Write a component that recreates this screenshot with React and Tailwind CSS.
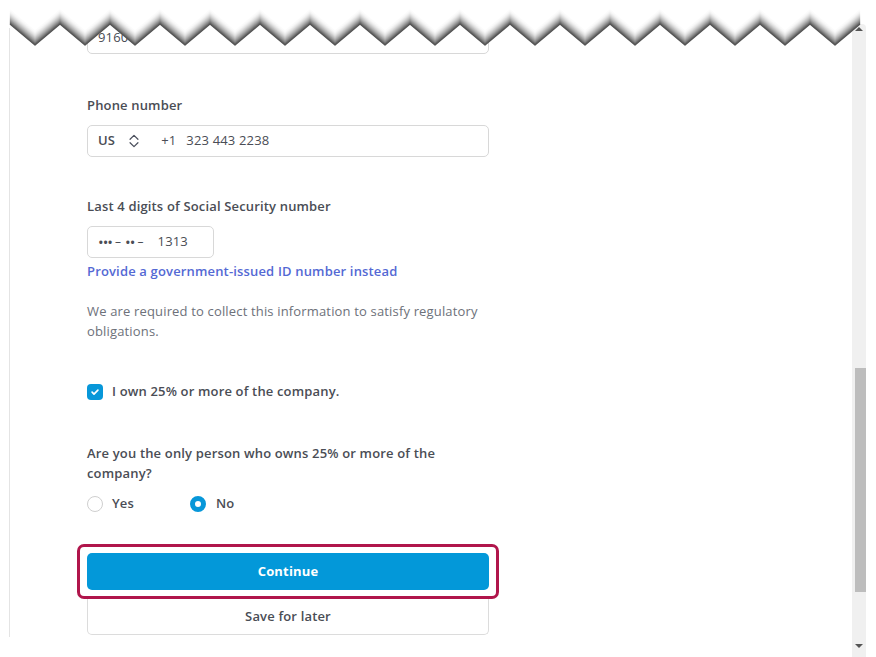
import React from 'react';

const ZIG_START = 10;
const ZIG_END = 860;

// bottom edge of the torn-paper band, shifted by d pixels
function zigPoints(d) {
    const pts = [];
    let k = 0;
    for (let x = ZIG_START; x <= ZIG_END; x += 25, k++) {
        const y = (k % 2 === 0 ? 24 : 45) + d;
        pts.push(`${x},${y}`);
    }
    return pts;
}

const TornEdge = () => {
    const top = zigPoints(-14);
    const cover = ['0,0', '876,0', '876,26', `${ZIG_END},10`, ...top.slice().reverse(), '10,28', '0,28'].join(' ');
    const bands = [];
    for (let i = 0; i <= 14; i++) {
        const t = i / 14;
        const g = Math.round(252 - 168 * Math.pow(t, 1.7));
        bands.push(
            <polyline
                key={i}
                points={zigPoints(-14 + i).join(' ')}
                fill="none"
                stroke={`rgb(${g},${g},${g})`}
                strokeWidth="1.4"
                strokeLinejoin="round"
            />
        );
    }
    return (
        <svg className="absolute left-0 top-0 pointer-events-none" width="876" height="60" viewBox="0 0 876 60" aria-hidden="true">
            <polygon points={cover} fill="#fff" />
            {bands}
        </svg>
    );
};

const UpDown = () => (
    <svg viewBox="0 0 16 16" className="h-[16px] w-[14px]" fill="none" stroke="#4a4f5c" strokeWidth="1.4" strokeLinecap="round" strokeLinejoin="round" aria-hidden="true">
        <path d="M3.5 6l4.5-4.5 4.5 4.5" />
        <path d="M3.5 10l4.5 4.5 4.5-4.5" />
    </svg>
);

const Label = ({ children, className = '' }) => (
    <div className={`text-[13px] leading-[20px] font-semibold text-[#4a4d55] ${className}`}>{children}</div>
);

export default function App() {
    return (
        <div className="relative w-[876px] h-[657px] overflow-hidden bg-white font-['Open_Sans','Noto_Sans',sans-serif] tracking-[0.16px]">
            <div className="flex h-full">
                {/* page frame */}
                <div className="ml-[9px] w-[843px] h-[637px] border-l border-[#e4e4e4]">
                    <div className="ml-[77px] w-[402px] pt-[22px]">
                        <div className="h-[32px] rounded-[5px] border border-[#d8d8d8] px-[10px] flex items-center text-[13px] text-[#4a4d55]">
                            9160
                        </div>

                        <Label className="mt-[41px]">Phone number</Label>
                        <div className="mt-[10px] h-[32px] rounded-[5px] border border-[#d8d8d8] px-[10px] flex items-center text-[13px] text-[#4a4d55]">
                            <span className="font-semibold">US</span>
                            <span className="ml-[12px]"><UpDown /></span>
                            <span className="ml-[20px]">+1</span>
                            <span className="ml-[10px]">323 443 2238</span>
                        </div>

                        <Label className="mt-[39px]">Last 4 digits of Social Security number</Label>
                        <div className="mt-[10px] h-[32px] w-[127px] rounded-[5px] border border-[#d8d8d8] px-[10px] flex items-center text-[13px] text-[#4a4d55]">
                            <span className="text-[15px] leading-none tracking-[-1px]">•••</span>
                            <span className="ml-[3px] text-[12px]">–</span>
                            <span className="ml-[4px] text-[15px] leading-none tracking-[-1px]">••</span>
                            <span className="ml-[3px] text-[12px]">–</span>
                            <span className="ml-[14px]">1313</span>
                        </div>
                        <div className="mt-[3px] text-[13px] leading-[20px] font-semibold text-[#5469d4]">
                            Provide a government-issued ID number instead
                        </div>

                        <p className="mt-[20px] text-[13px] leading-[20px] text-[#6d717a]">
                            We are required to collect this information to satisfy regulatory obligations.
                        </p>

                        <div className="mt-[41px] flex items-center h-[20px]">
                            <span className="h-[16px] w-[16px] rounded-[4px] bg-[#0797d9] flex items-center justify-center">
                                <svg viewBox="0 0 12 12" className="h-[10px] w-[10px]" fill="none" stroke="#fff" strokeWidth="2" strokeLinecap="round" strokeLinejoin="round" aria-hidden="true">
                                    <path d="M2.5 6.2l2.3 2.3 4.7-4.8" />
                                </svg>
                            </span>
                            <span className="ml-[9px] text-[13px] font-semibold text-[#4a4d55]">I own 25% or more of the company.</span>
                        </div>

                        <Label className="mt-[41px] w-[380px]">Are you the only person who owns 25% or more of the company?</Label>

                        <div className="mt-[11px] flex items-center h-[20px] text-[13px] font-semibold text-[#4a4d55]">
                            <span className="h-[16px] w-[16px] rounded-full border border-[#cfcfcf] bg-white" />
                            <span className="ml-[9px] w-[78px]">Yes</span>
                            <span className="h-[16px] w-[16px] rounded-full border-[5px] border-[#0797d9] bg-white" />
                            <span className="ml-[10px]">No</span>
                        </div>

                        <div className="mt-[30px] -mx-[10px] rounded-[7px] border-[3px] border-[#b0154b] px-[7px] py-[6px]">
                            <button type="button" className="w-full h-[37px] rounded-[5px] bg-[#0398d9] text-[13px] font-bold text-white">
                                Continue
                            </button>
                        </div>
                        <button type="button" className="w-full h-[36px] rounded-b-[5px] border border-t-0 border-[#dcdcdc] bg-white text-[13px] font-semibold text-[#4a4d55]">
                            Save for later
                        </button>
                    </div>
                </div>

                {/* scrollbar */}
                <div className="mt-[24px] w-[14px] h-[633px] rounded-tr-[4px] bg-[#f0f0f0] flex flex-col items-center">
                    <div className="mt-[3px] h-0 w-0 border-x-[4px] border-x-transparent border-b-[4px] border-b-[#555]" />
                    <div className="mt-[337px] ml-[3px] w-[11px] h-[224px] bg-[#bdbdbd]" />
                    <div className="mt-[52px] h-0 w-0 border-x-[4px] border-x-transparent border-t-[4px] border-t-[#555]" />
                </div>
            </div>
            <TornEdge />
        </div>
    );
}
